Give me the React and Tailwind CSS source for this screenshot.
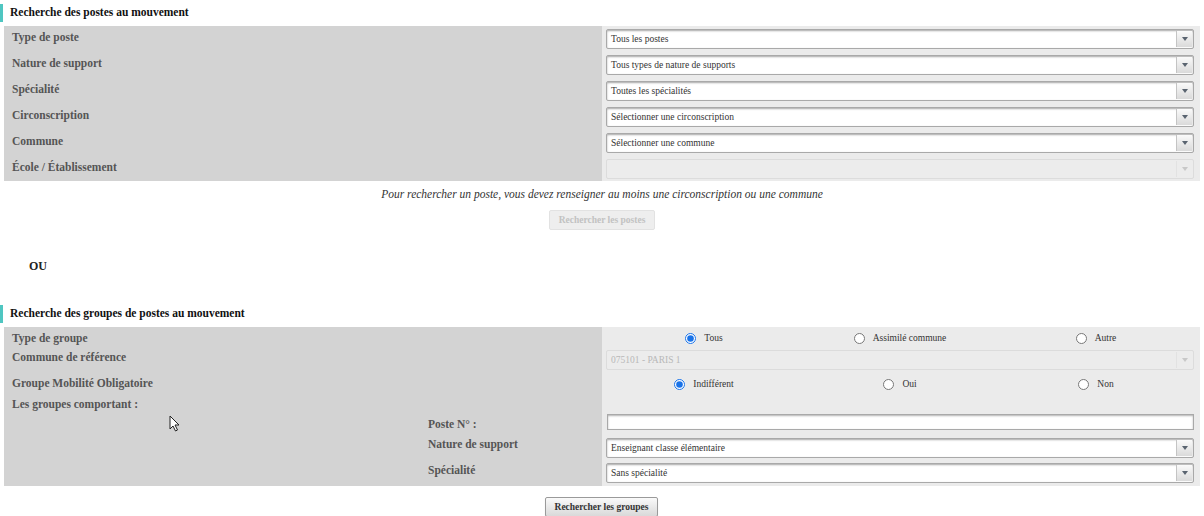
import React from "react";

const serif = { fontFamily: '"Liberation Serif", "Times New Roman", serif' };

const Arrow = ({ faded }) => (
  <span
    className={`w-0 h-0 border-l-[3px] border-r-[3px] border-t-[4px] border-l-transparent border-r-transparent ${
      faded ? "border-t-[#c8c8c8]" : "border-t-[#5a6470]"
    }`}
  />
);

const Select = ({ value, disabled }) => (
  <div
    className={`flex h-[20px] ml-[4px] mr-[6px] rounded-[2px] border ${
      disabled
        ? "border-[#dcdcdc] bg-[#ececec]"
        : "border-[#a9a9a9] bg-white shadow-[inset_0_1px_2px_rgba(0,0,0,0.35)]"
    }`}
  >
    <span
      className={`flex-1 px-[4px] text-[9.5px] leading-[18px] truncate ${
        disabled ? "text-[#b8b8b8]" : "text-[#333]"
      }`}
    >
      {value}
    </span>
    <span
      className={`w-[16px] my-[1px] mr-[1px] flex items-center justify-center border-l ${
        disabled
          ? "border-[#e2e2e2] bg-[#ececec]"
          : "border-[#c4c4c4] bg-gradient-to-b from-[#fafafa] to-[#dadada]"
      }`}
    >
      <Arrow faded={disabled} />
    </span>
  </div>
);

const Radio = ({ label, checked, name }) => (
  <label className="flex items-center justify-center gap-[8px] text-[9.5px] text-[#333]">
    <input
      type="radio"
      name={name}
      defaultChecked={checked}
      className="w-[11px] h-[11px] m-0 accent-[#1a73e8]"
    />
    {label}
  </label>
);

const Label = ({ children, indent }) => (
  <div
    className={`text-[11.5px] font-bold leading-[16px] text-[#555] ${
      indent ? "pl-[424px]" : "pl-[8px]"
    }`}
  >
    {children}
  </div>
);

const Row = ({ h, label, indent, pt = 3, children, rpt = 3 }) => (
  <div className="grid grid-cols-[598px_1fr]" style={{ height: h }}>
    <div className="bg-[#d3d3d3]" style={{ paddingTop: pt }}>
      <Label indent={indent}>{label}</Label>
    </div>
    <div className="bg-[#ebebeb]" style={{ paddingTop: rpt }}>
      {children}
    </div>
  </div>
);

const Heading = ({ children }) => (
  <div className="flex items-center h-[18px] border-l-[3px] border-[#4fc6c1]">
    <span className="pl-[7px] text-[11.5px] font-bold text-[#111]">{children}</span>
  </div>
);

export default function App() {
  return (
    <div className="relative w-[1204px] h-[516px] bg-white overflow-hidden" style={serif}>
      <div className="pt-[4px]">
        <Heading>Recherche des postes au mouvement</Heading>
      </div>

      <div className="mx-[4px] mt-[4px]">
        <Row h={26} label="Type de poste">
          <Select value="Tous les postes" />
        </Row>
        <Row h={26} label="Nature de support">
          <Select value="Tous types de nature de supports" />
        </Row>
        <Row h={26} label="Spécialité">
          <Select value="Toutes les spécialités" />
        </Row>
        <Row h={26} label="Circonscription">
          <Select value="Sélectionner une circonscription" />
        </Row>
        <Row h={26} label="Commune">
          <Select value="Sélectionner une commune" />
        </Row>
        <Row h={25} label="École / Établissement">
          <Select value="" disabled />
        </Row>
      </div>

      <p className="mt-[5px] text-center italic text-[11.5px] leading-[16px] text-[#333]">
        Pour rechercher un poste, vous devez renseigner au moins une circonscription ou une commune
      </p>
      <div className="flex justify-center mt-[8px]">
        <button
          disabled
          className="h-[20px] w-[106px] rounded-[2px] border border-[#e2e2e2] bg-[#eeeeee] text-[9.5px] font-bold text-[#c2c2c2]"
        >
          Rechercher les postes
        </button>
      </div>

      <div className="mt-[28px] pl-[29px] text-[12px] font-bold text-[#222] leading-[16px]">OU</div>

      <div className="mt-[31px]">
        <Heading>Recherche des groupes de postes au mouvement</Heading>
      </div>

      <div className="mx-[4px] mt-[4px]">
        <Row h={20} label="Type de groupe" pt={3} rpt={4}>
          <div className="grid grid-cols-3 ml-[4px] mr-[6px] h-[14px]">
            <Radio name="tg" label="Tous" checked />
            <Radio name="tg" label="Assimilé commune" />
            <Radio name="tg" label="Autre" />
          </div>
        </Row>
        <Row h={26} label="Commune de référence" pt={2} rpt={3}>
          <Select value="075101 - PARIS 1" disabled />
        </Row>
        <Row h={22} label="Groupe Mobilité Obligatoire" pt={2} rpt={4}>
          <div className="grid grid-cols-3 ml-[4px] mr-[6px] h-[14px]">
            <Radio name="gm" label="Indifférent" checked />
            <Radio name="gm" label="Oui" />
            <Radio name="gm" label="Non" />
          </div>
        </Row>
        <Row h={17} label="Les groupes comportant :" pt={1}>
          <div />
        </Row>
        <Row h={24} label="Poste N° :" indent pt={4} rpt={2}>
          <div className="h-[16px] ml-[5px] mr-[6px] bg-white border border-[#a9a9a9] shadow-[inset_0_1px_2px_rgba(0,0,0,0.3)]" />
        </Row>
        <Row h={24} label="Nature de support" indent pt={0} rpt={2}>
          <Select value="Enseignant classe élémentaire" />
        </Row>
        <Row h={26} label="Spécialité" indent pt={2} rpt={3}>
          <Select value="Sans spécialité" />
        </Row>
      </div>

      <div className="flex justify-center mt-[11px]">
        <button className="ml-[-1px] h-[20px] w-[113px] rounded-[2px] border border-[#9a9a9a] bg-gradient-to-b from-[#fafafa] to-[#d9d9d9] text-[9.5px] font-bold text-[#333] shadow-[0_1px_1px_rgba(0,0,0,0.15)]">
          Rechercher les groupes
        </button>
      </div>

      <svg
        className="absolute left-[169px] top-[415px]"
        width="11"
        height="17"
        viewBox="0 0 11 17"
      >
        <path
          d="M1 1 L1 14 L4 11 L6.5 16 L8.5 15 L6 10 L10 10 Z"
          fill="#fff"
          stroke="#222"
          strokeWidth="1"
          strokeLinejoin="round"
        />
      </svg>
    </div>
  );
}
